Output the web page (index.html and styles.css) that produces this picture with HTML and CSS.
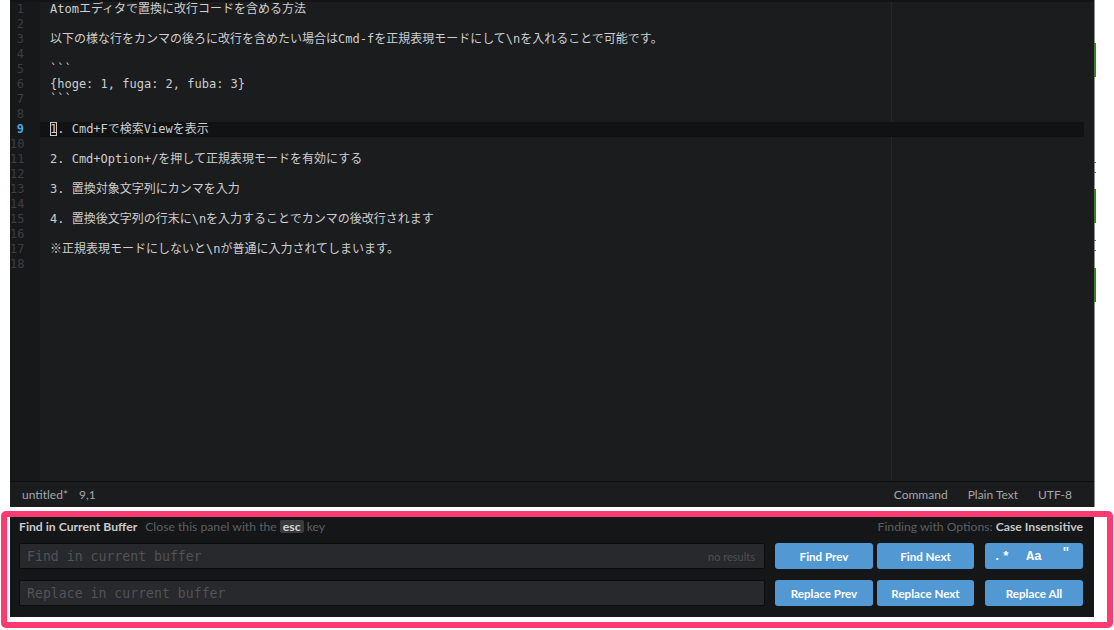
FILE: index.html
```html
<!DOCTYPE html>
<html lang="ja">
<head>
<meta charset="utf-8">
<title>Atom find and replace</title>
<link rel="stylesheet" href="styles.css">
</head>
<body>
<div class="window">
  <div class="editor">
    <div class="gutter">
      <div class="ln">1</div>
      <div class="ln">2</div>
      <div class="ln">3</div>
      <div class="ln">4</div>
      <div class="ln">5</div>
      <div class="ln">6</div>
      <div class="ln">7</div>
      <div class="ln">8</div>
      <div class="ln current">9</div>
      <div class="ln">10</div>
      <div class="ln">11</div>
      <div class="ln">12</div>
      <div class="ln">13</div>
      <div class="ln">14</div>
      <div class="ln">15</div>
      <div class="ln">16</div>
      <div class="ln">17</div>
      <div class="ln">18</div>
    </div>
    <div class="lines">
      <div class="wrap-guide"></div>
      <div class="line">Atomエディタで置換に改行コードを含める方法</div>
      <div class="line"></div>
      <div class="line">以下の様な行をカンマの後ろに改行を含めたい場合はCmd-fを正規表現モードにして\nを入れることで可能です。</div>
      <div class="line"></div>
      <div class="line">```</div>
      <div class="line">{hoge: 1, fuga: 2, fuba: 3}</div>
      <div class="line">```</div>
      <div class="line"></div>
      <div class="line cursor-line"><span class="cursor">1</span>. Cmd+Fで検索Viewを表示</div>
      <div class="line"></div>
      <div class="line">2. Cmd+Option+/を押して正規表現モードを有効にする</div>
      <div class="line"></div>
      <div class="line">3. 置換対象文字列にカンマを入力</div>
      <div class="line"></div>
      <div class="line">4. 置換後文字列の行末に\nを入力することでカンマの後改行されます</div>
      <div class="line"></div>
      <div class="line">※正規表現モードにしないと\nが普通に入力されてしまいます。</div>
      <div class="line"></div>
    </div>
    <div class="scrollbar"></div>
  </div>
  <div class="status">
    <span class="status-file">untitled*</span>
    <span class="status-pos">9,1</span>
    <span class="status-right">
      <span>Command</span>
      <span>Plain Text</span>
      <span>UTF-8</span>
    </span>
  </div>
  <div class="mark green m1"></div>
  <div class="mark gray m2"></div>
  <div class="mark gray m3"></div>
  <div class="mark green m4"></div>
  <div class="mark gray m5"></div>
  <div class="mark gray m6"></div>
  <div class="mark green m7"></div>
</div>

<div class="find-wrap">
  <div class="find-panel">
    <div class="find-header">
      <span class="title">Find in Current Buffer</span>
      <span class="hint">Close this panel with the <span class="kbd">esc</span> key</span>
      <span class="options-info">Finding with Options: <span class="opt">Case Insensitive</span></span>
    </div>
    <div class="row">
      <div class="input"><span class="placeholder">Find in current buffer</span><span class="results">no results</span></div>
      <div class="btn">Find Prev</div>
      <div class="btn gap-s">Find Next</div>
      <div class="btn gap-l opts"><span class="o-regex">.*</span><span class="o-case">Aa</span><span class="o-word">"</span></div>
    </div>
    <div class="row">
      <div class="input"><span class="placeholder">Replace in current buffer</span></div>
      <div class="btn">Replace Prev</div>
      <div class="btn gap-s">Replace Next</div>
      <div class="btn gap-l">Replace All</div>
    </div>
  </div>
  <div class="frame"></div>
</div>
</body>
</html>
```

FILE: styles.css
```css
* { box-sizing: border-box; }
html, body { margin: 0; padding: 0; background: #ffffff; }
body {
  width: 1114px;
  height: 630px;
  overflow: hidden;
  font-family: Lato, "Noto Sans", sans-serif;
}

.window {
  position: relative;
  margin-left: 10px;
  width: 1085px;
  border-right: 1px solid #8e8e8e;
  background: #1b1c1e;
}

.editor {
  display: flex;
  height: 481px;
  border-top: 2px solid #131416;
}

.gutter {
  width: 30px;
  background: #17181a;
  font: 12px/15px "DejaVu Sans Mono", monospace;
  color: #3c3e42;
  text-align: right;
  padding-right: 16px;
}
.ln { height: 15px; white-space: nowrap; }
.ln.current { color: #4aa6e4; font-weight: bold; }

.lines {
  flex: 1;
  position: relative;
  padding-left: 10px;
  font: 12px/15px "DejaVu Sans Mono", "Noto Sans CJK JP", monospace;
  color: #cdcecf;
}
.line { position: relative; height: 15px; white-space: pre; }
.line.cursor-line {
  background: #111214;
  margin-left: -10px;
  padding-left: 10px;
}
.cursor { box-shadow: inset 0 0 0 1px #c9cacb; }

.wrap-guide {
  position: absolute;
  left: 851px;
  top: 0;
  bottom: 0;
  width: 1px;
  background: #25262a;
}

.scrollbar { width: 10px; }

.status {
  height: 26px;
  border-top: 1px solid #0d0e0f;
  display: flex;
  align-items: center;
  padding: 0 22px 0 12px;
  font-size: 12px;
  color: #a3a6aa;
  background: #1b1c1e;
}
.status-file { margin-right: 11px; }
.status-right { margin-left: auto; display: flex; gap: 20px; }

.mark { position: absolute; right: -2px; width: 2px; }
.mark.green { background: #3b7c28; height: 34px; }
.mark.gray { background: #5c5c5c; height: 1px; }
.m1 { top: 43px; }
.m2 { top: 162px; }
.m3 { top: 172px; }
.m4 { top: 189px; }
.m5 { top: 240px; }
.m6 { top: 250px; }
.m7 { top: 268px; }

.find-wrap {
  position: relative;
  margin: 10px 0 0 10px;
  width: 1084px;
}
.find-panel {
  background: #151618;
  height: 100px;
  padding: 0 11px 11px 9px;
  display: flex;
  flex-direction: column;
}
.find-header {
  height: 18px;
  margin-bottom: 8px;
  display: flex;
  align-items: center;
  font-size: 12.2px;
  white-space: nowrap;
}
.title { color: #cacbcd; font-weight: bold; margin-right: 8px; }
.hint { color: #5d5f63; }
.kbd {
  display: inline-block;
  background: #3a3b3e;
  color: #d2d3d5;
  font-weight: bold;
  padding: 0 3px;
  border-radius: 2px;
  line-height: 13px;
}
.options-info { margin-left: auto; color: #5d5f63; }
.opt { color: #c4c5c7; font-weight: bold; }

.row { display: flex; height: 26px; }
.row + .row { margin-top: 11px; }

.input {
  flex: 1;
  margin-right: 10px;
  display: flex;
  align-items: center;
  background: #28292c;
  border: 1px solid #0c0c0d;
  border-radius: 2px;
  padding: 0 9px 0 7px;
}
.placeholder {
  font: 13.2px "DejaVu Sans Mono", monospace;
  color: #515357;
}
.results {
  margin-left: auto;
  font-size: 11px;
  color: #4e5054;
}

.btn {
  width: 98px;
  display: flex;
  align-items: center;
  justify-content: center;
  background: #5299d3;
  border-radius: 3px;
  color: #ffffff;
  font-size: 11.6px;
  font-weight: bold;
}
.btn.gap-s { margin-left: 4px; width: 97px; }
.btn.gap-l { margin-left: 11px; }

.opts { justify-content: flex-start; padding: 0 1px; }
.opts span {
  width: 32px;
  text-align: center;
  font-family: "Liberation Mono", monospace;
  font-weight: bold;
  font-size: 13px;
}
.o-regex { letter-spacing: 1px; }
.o-word { align-self: flex-start; padding-top: 2px; }

.frame {
  position: absolute;
  left: -9px;
  top: -6px;
  width: 1112px;
  height: 117px;
  border: 6px solid #fe3a72;
  border-radius: 5px;
  pointer-events: none;
}
```
